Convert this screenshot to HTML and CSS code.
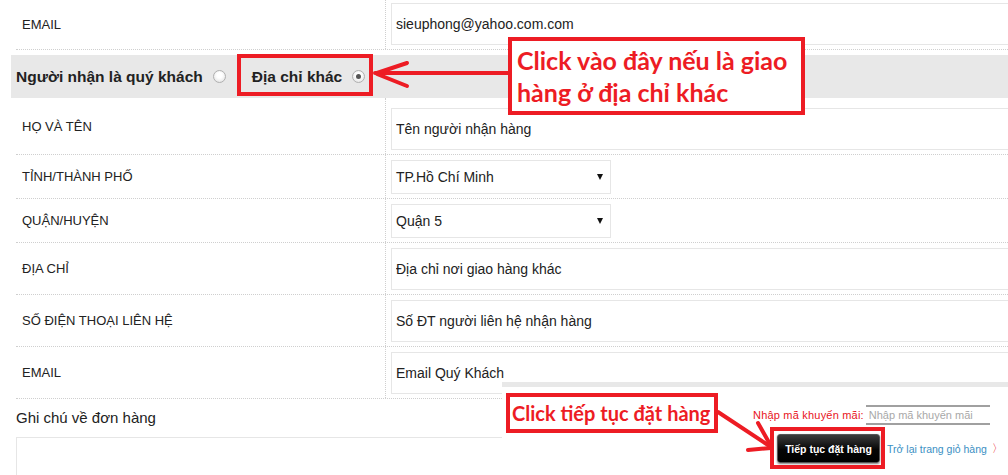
FILE: index.html
```html
<!DOCTYPE html>
<html lang="vi">
<head>
  <meta charset="UTF-8">
  <title>Thông tin giao hàng</title>
  <link rel="stylesheet" href="styles.css">
</head>
<body>
  <div class="form">
    <div class="row first">
      <div class="label">EMAIL</div>
      <div class="field"><input class="text" value="sieuphong@yahoo.com.com"></div>
    </div>

    <div class="choice">
      <div class="choice-bar">
        <span class="option">Người nhận là quý khách <span class="radio"></span></span>
        <span class="option second">Địa chỉ khác <span class="radio checked"></span></span>
      </div>
    </div>

    <div class="row after-choice">
      <div class="label">HỌ VÀ TÊN</div>
      <div class="field"><input class="text" value="Tên người nhận hàng"></div>
    </div>
    <div class="row">
      <div class="label">TỈNH/THÀNH PHỐ</div>
      <div class="field"><div class="select">TP.Hồ Chí Minh</div></div>
    </div>
    <div class="row">
      <div class="label">QUẬN/HUYỆN</div>
      <div class="field"><div class="select">Quận 5</div></div>
    </div>
    <div class="row">
      <div class="label">ĐỊA CHỈ</div>
      <div class="field"><input class="text" value="Địa chỉ nơi giao hàng khác"></div>
    </div>
    <div class="row">
      <div class="label">SỐ ĐIỆN THOẠI LIÊN HỆ</div>
      <div class="field"><input class="text" value="Số ĐT người liên hệ nhận hàng"></div>
    </div>
    <div class="row">
      <div class="label">EMAIL</div>
      <div class="field"><input class="text" value="Email Quý Khách"></div>
    </div>

    <div class="note">
      <div class="note-title">Ghi chú về đơn hàng</div>
      <div class="note-box"></div>
    </div>
  </div>

  <div class="checkout">
    <div class="promo">
      <span class="promo-label">Nhập mã khuyến mãi:</span>
      <input class="promo-input" placeholder="Nhập mã khuyến mãi">
    </div>
    <div class="actions">
      <button class="order-btn">Tiếp tục đặt hàng</button>
      <a class="back-link" href="#">Trở lại trang giỏ hàng</a>
      <span class="back-arrow">〉</span>
    </div>
  </div>

  <!-- annotations -->
  <div class="mark mark-radio"></div>
  <div class="mark mark-button"></div>
  <div class="callout callout-address">Click vào đây nếu là giao<br>hàng ở địa chỉ khác</div>
  <div class="callout callout-order">Click tiếp tục đặt hàng</div>
  <svg class="arrows" width="1008" height="475" viewBox="0 0 1008 475">
    <g stroke="#ed1c24" stroke-width="4" stroke-linecap="round" fill="none">
      <line x1="375" y1="73" x2="508" y2="73"/>
      <line x1="377" y1="73" x2="407" y2="63"/>
      <line x1="377" y1="74" x2="407" y2="86"/>
      <line x1="718" y1="412" x2="771" y2="447"/>
      <line x1="748" y1="450" x2="771" y2="448"/>
      <line x1="758" y1="423" x2="771" y2="446"/>
    </g>
  </svg>
</body>
</html>
```

FILE: styles.css
```css
body {
  margin: 0;
  width: 1008px;
  height: 475px;
  overflow: hidden;
  position: relative;
  background: #fff;
  font-family: "Liberation Sans", Arial, sans-serif;
  color: #222;
}

.form {
  padding-left: 16px;
}

.row {
  display: flex;
  border-bottom: 1px dotted #cfcfcf;
}

.label {
  width: 363px;
  padding-left: 6px;
  border-right: 1px dotted #cfcfcf;
  display: flex;
  align-items: center;
  font-size: 13px;
}

.field {
  flex: 1;
  padding: 5px 0 4px 5px;
}

.row.first .field {
  padding-top: 3px;
}

.row.after-choice .field {
  padding-top: 10px;
}

/* inputs run on past the right edge of the window */
.text {
  display: block;
  box-sizing: border-box;
  width: 100%;
  height: 42px;
  border: 1px solid #e6e6e6;
  border-right: 0;
  padding: 0 4px;
  font-family: inherit;
  font-size: 14px;
  color: #222;
  outline: none;
}

.select {
  position: relative;
  box-sizing: border-box;
  width: 220px;
  height: 34px;
  border: 1px solid #e6e6e6;
  padding-left: 4px;
  line-height: 32px;
  font-size: 14px;
}

.select::after {
  content: "";
  position: absolute;
  right: 7px;
  top: 13px;
  border-left: 3.5px solid transparent;
  border-right: 3.5px solid transparent;
  border-top: 6px solid #111;
}

.choice {
  padding-top: 5px;
}

.choice-bar {
  margin-left: -5px;
  height: 43px;
  background: #e8e8e8;
  padding-left: 5px;
  display: flex;
  align-items: center;
  font-size: 15.5px;
  font-weight: bold;
}

.option {
  display: flex;
  align-items: center;
  gap: 10px;
}

.option.second {
  margin-left: 26px;
}

.radio {
  width: 11px;
  height: 11px;
  border: 1px solid #b0b0b0;
  border-radius: 50%;
  background: radial-gradient(circle at 50% 40%, #fff 30%, #dcdcdc 100%);
  position: relative;
}

.radio.checked::after {
  content: "";
  position: absolute;
  left: 3px;
  top: 3px;
  width: 5px;
  height: 5px;
  border-radius: 50%;
  background: #555;
}

.note-title {
  padding-top: 10px;
  font-size: 15px;
  line-height: 17px;
}

.note-box {
  margin-top: 11px;
  height: 37px;
  border: 1px solid #e6e6e6;
  border-right: 0;
  border-bottom: 0;
}

/* bottom panel laid over the form */
.checkout {
  position: absolute;
  left: 502px;
  top: 382px;
  right: 0;
  bottom: 0;
  background: #fff;
  border-top: 5px solid #e8e8e8;
}

.promo {
  display: flex;
  align-items: center;
  margin: 18px 0 0 251px;
  font-size: 11px;
}

.promo-label {
  color: #e8141c;
  letter-spacing: 0.2px;
}

.promo-input {
  box-sizing: border-box;
  width: 124px;
  height: 20px;
  margin-left: 2px;
  border: 0;
  border-top: 2px solid #a0a0a0;
  border-bottom: 2px solid #a0a0a0;
  padding: 0 3px;
  font-family: inherit;
  font-size: 11px;
  outline: none;
}

.promo-input::placeholder {
  color: #a8a8a8;
}

.actions {
  display: flex;
  align-items: center;
  margin: 9px 0 0 275px;
}

.order-btn {
  width: 103px;
  height: 29px;
  border: 1px solid #555;
  border-radius: 3px;
  background: linear-gradient(#3c3c3c, #050505 55%, #000);
  box-shadow: 0 1px 2px rgba(0, 0, 0, 0.5);
  color: #fff;
  font-family: inherit;
  font-weight: bold;
  font-size: 10.5px;
  padding: 0;
}

.back-link {
  margin-left: 7px;
  color: #3a8fc3;
  font-size: 10.5px;
  text-decoration: none;
}

.back-arrow {
  margin-left: 5px;
  color: #e8141c;
  font-size: 11px;
}

/* red annotations */
.mark {
  position: absolute;
  border: 4px solid #ed1c24;
}

.mark-radio {
  left: 237px;
  top: 54px;
  width: 128px;
  height: 34px;
}

.mark-button {
  left: 770px;
  top: 427px;
  width: 107px;
  height: 34px;
}

.callout {
  position: absolute;
  border: 4px solid #ed1c24;
  background: #fff;
  color: #ed1c24;
  font-family: Lato, "Open Sans", sans-serif;
  font-weight: bold;
}

.callout-address {
  left: 508px;
  top: 37px;
  width: 284px;
  padding: 3px 0 3px 5px;
  font-size: 25px;
  line-height: 32px;
}

.callout-order {
  left: 506px;
  top: 393px;
  width: 202px;
  height: 32px;
  padding-left: 2px;
  font-size: 20px;
  line-height: 32px;
}

.arrows {
  position: absolute;
  left: 0;
  top: 0;
  pointer-events: none;
}
```
